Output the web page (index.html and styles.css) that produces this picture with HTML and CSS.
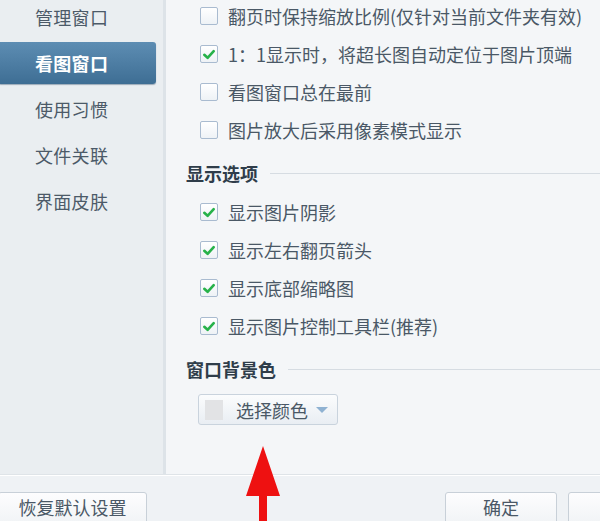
FILE: index.html
```html
<!DOCTYPE html>
<html lang="zh-CN">
<head>
<meta charset="utf-8">
<link rel="stylesheet" href="styles.css">
</head>
<body>
<div class="window">
  <div class="top">
    <nav class="sidebar">
      <div class="nav-item">管理窗口</div>
      <div class="nav-item active">看图窗口</div>
      <div class="nav-item">使用习惯</div>
      <div class="nav-item">文件关联</div>
      <div class="nav-item">界面皮肤</div>
    </nav>
    <main class="content">
      <div class="row"><span class="cb"></span><span class="label">翻页时保持缩放比例(仅针对当前文件夹有效)</span></div>
      <div class="row"><span class="cb on"><svg viewBox="0 0 17 17"><path d="M3.5 8.8 L7 12 L13.5 5" /></svg></span><span class="label">1：1显示时，将超长图自动定位于图片顶端</span></div>
      <div class="row"><span class="cb"></span><span class="label">看图窗口总在最前</span></div>
      <div class="row"><span class="cb"></span><span class="label">图片放大后采用像素模式显示</span></div>

      <div class="section"><span class="section-title">显示选项</span><span class="rule"></span></div>
      <div class="row"><span class="cb on"><svg viewBox="0 0 17 17"><path d="M3.5 8.8 L7 12 L13.5 5" /></svg></span><span class="label">显示图片阴影</span></div>
      <div class="row"><span class="cb on"><svg viewBox="0 0 17 17"><path d="M3.5 8.8 L7 12 L13.5 5" /></svg></span><span class="label">显示左右翻页箭头</span></div>
      <div class="row"><span class="cb on"><svg viewBox="0 0 17 17"><path d="M3.5 8.8 L7 12 L13.5 5" /></svg></span><span class="label">显示底部缩略图</span></div>
      <div class="row"><span class="cb on"><svg viewBox="0 0 17 17"><path d="M3.5 8.8 L7 12 L13.5 5" /></svg></span><span class="label">显示图片控制工具栏(推荐)</span></div>

      <div class="section"><span class="section-title">窗口背景色</span><span class="rule"></span></div>
      <div class="color-btn"><span class="swatch"></span><span class="color-text">选择颜色</span><span class="caret"></span></div>
    </main>
  </div>
  <div class="bottom">
    <div class="btn btn-reset">恢复默认设置</div>
    <div class="spacer"></div>
    <div class="btn btn-ok">确定</div>
    <div class="btn btn-cancel"></div>
  </div>
  <svg class="arrow" width="40" height="76" viewBox="0 0 40 76">
    <path d="M20 0 L37 50 L24 50 L24 76 L16 76 L16 50 L3 50 Z" fill="#ee1111"/>
  </svg>
</div>
</body>
</html>
```
FILE: styles.css
```css
* { box-sizing: border-box; }
html, body {
  margin: 0;
  padding: 0;
  width: 600px;
  height: 521px;
  overflow: hidden;
  background: #f4f6f8;
  font-family: "Noto Sans CJK SC", "Noto Sans", sans-serif;
}
.window {
  position: relative;
  width: 600px;
  height: 521px;
  display: flex;
  flex-direction: column;
  overflow: hidden;
}
.top {
  display: flex;
  height: 475px;
  flex: none;
  border-bottom: 1px solid #dfe4e8;
  overflow: hidden;
}
.sidebar {
  width: 166px;
  flex: none;
  background: #eaeef1;
  border-right: 3px solid #dde3e8;
  display: flex;
  flex-direction: column;
  margin-top: -6px;
}
.nav-item {
  height: 46px;
  display: flex;
  align-items: center;
  padding-left: 35px;
  font-size: 18px;
  color: #4c5a68;
  letter-spacing: 0.3px;
}
.nav-item.active {
  height: 42px;
  margin: 2px 7px 2px 0;
  border-radius: 0 3px 3px 0;
  background: linear-gradient(#5d8db3, #3e6e94);
  color: #ffffff;
  font-weight: 700;
  box-shadow: 0 1px 1px rgba(40, 70, 100, 0.4);
}
.content {
  flex: 1;
  background: #f4f6f8;
  padding-left: 20px;
  margin-top: -3px;
  display: flex;
  flex-direction: column;
}
.row {
  height: 38px;
  display: flex;
  align-items: center;
  padding-left: 14px;
  flex: none;
}
.cb {
  width: 18px;
  height: 18px;
  border: 1px solid #a9bbd0;
  border-radius: 2px;
  background: linear-gradient(#ffffff, #eef2f6);
  flex: none;
  display: flex;
  align-items: center;
  justify-content: center;
}
.cb svg {
  width: 17px;
  height: 17px;
}
.cb svg path {
  fill: none;
  stroke: #27b24a;
  stroke-width: 2.8;
  stroke-linecap: round;
  stroke-linejoin: round;
}
.label {
  margin-left: 10px;
  font-size: 18px;
  color: #4a5866;
  white-space: nowrap;
}
.section {
  height: 24px;
  margin-top: 12px;
  margin-bottom: 8px;
  display: flex;
  align-items: center;
  flex: none;
}
.section-title {
  font-size: 18px;
  font-weight: 700;
  color: #2f3d4a;
  white-space: nowrap;
}
.rule {
  flex: 1;
  height: 1px;
  background: #d6dce2;
  margin-left: 12px;
}
.color-btn {
  margin-top: 5px;
  margin-left: 12px;
  width: 140px;
  height: 31px;
  border: 1px solid #c9d3dd;
  border-radius: 3px;
  background: linear-gradient(#fbfcfd, #e9eef3);
  display: flex;
  align-items: center;
  padding-left: 6px;
  flex: none;
}
.swatch {
  width: 18px;
  height: 20px;
  background: #e2e3e5;
}
.color-text {
  margin-left: 13px;
  font-size: 18px;
  color: #4a5866;
}
.caret {
  margin-left: 8px;
  width: 0;
  height: 0;
  border-left: 6px solid transparent;
  border-right: 6px solid transparent;
  border-top: 6px solid #8fb2d2;
}
.bottom {
  flex: 1;
  min-height: 0;
  background: #eff2f5;
  border-top: 1px solid #ffffff;
  display: flex;
  align-items: flex-start;
  padding-top: 16px;
  overflow: hidden;
}
.btn {
  height: 40px;
  border: 1px solid #c8d0d8;
  border-radius: 3px;
  background: linear-gradient(#fdfdfe, #eef1f4);
  font-size: 18px;
  line-height: 26px;
  color: #4a5866;
  display: flex;
  justify-content: center;
  padding-top: 1px;
  flex: none;
}
.btn-reset {
  width: 149px;
  margin-left: -2px;
}
.spacer { flex: 1; }
.btn-ok {
  width: 112px;
}
.btn-cancel {
  width: 40px;
  margin-left: 11px;
  margin-right: -8px;
}
.arrow {
  position: absolute;
  left: 243px;
  top: 446px;
}
```
